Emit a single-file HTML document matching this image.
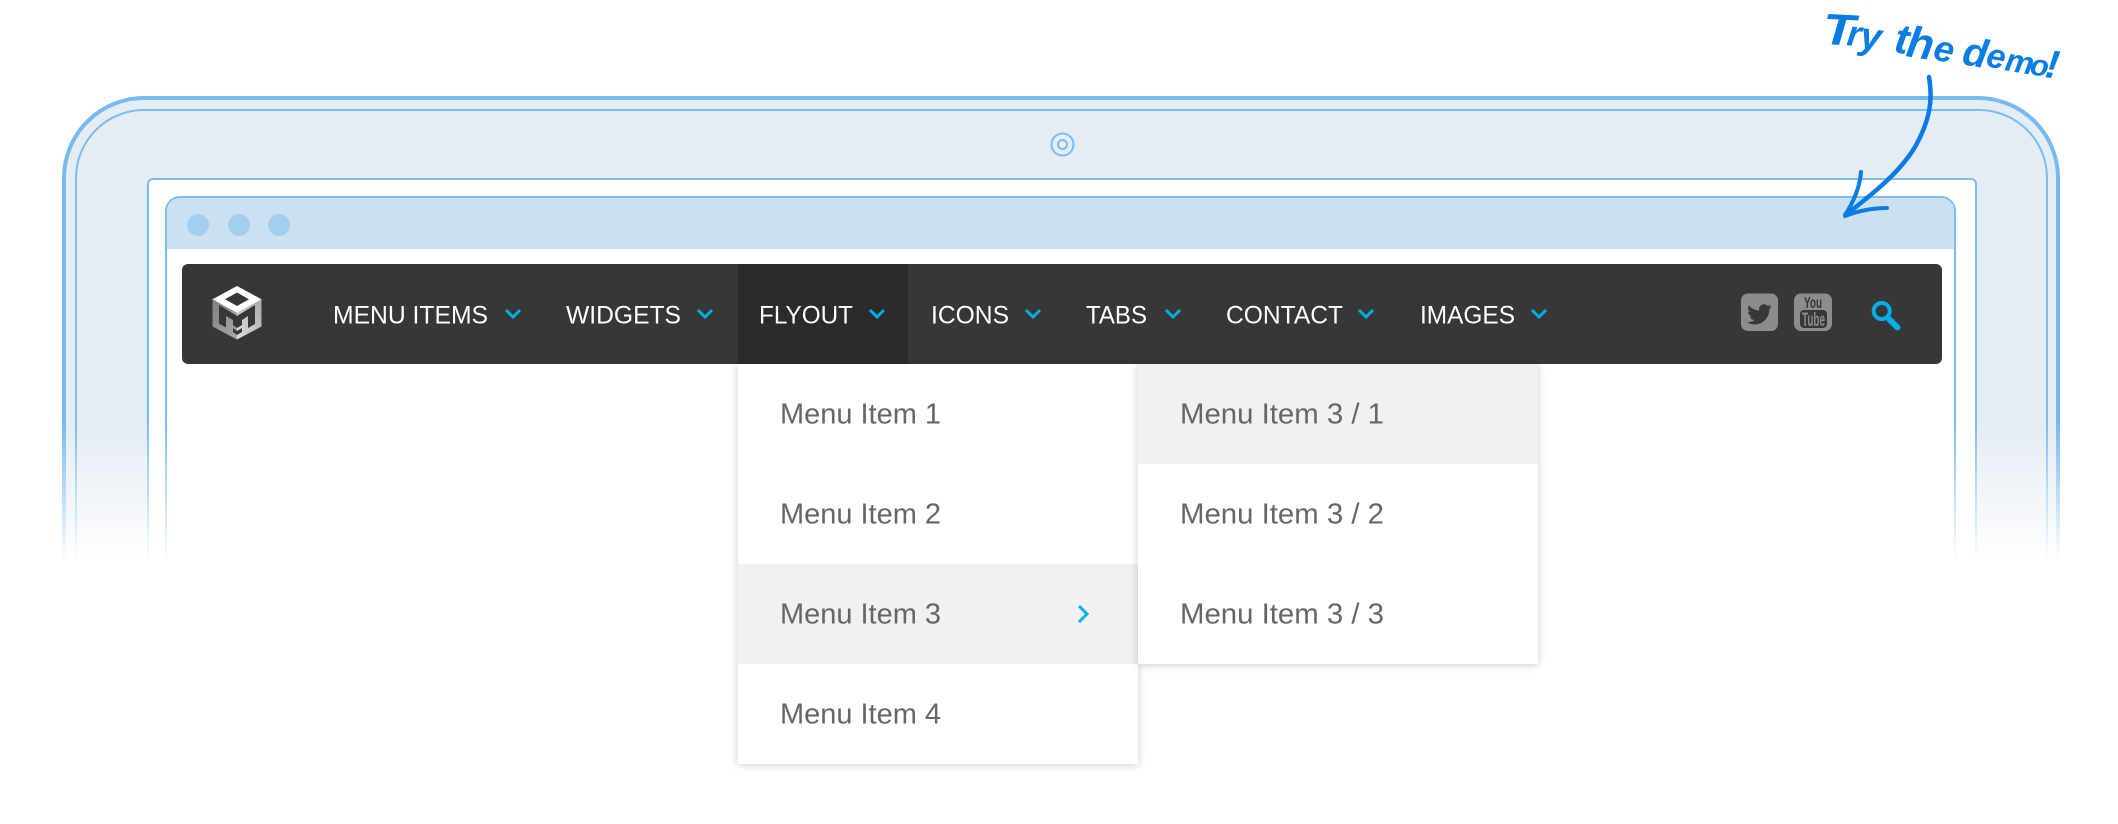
<!DOCTYPE html>
<html lang="en"><head><meta charset="utf-8"><title>Try the demo</title>
<style>
html,body{margin:0;padding:0;background:#fff}
#page{position:relative;width:2118px;height:824px;overflow:hidden;background:#fff;font-family:"Liberation Sans",sans-serif}
#page div{position:absolute;box-sizing:border-box}
.outer{left:62px;top:96px;width:1998px;height:520px;border:4px solid #78b9ee;border-radius:82px 82px 0 0;background:#e4ecf4}
.inner{left:75px;top:109px;width:1973px;height:500px;border:2px solid #7dbcef;border-radius:69px 69px 0 0}
.screen{left:147px;top:178px;width:1830px;height:430px;border:2px solid #7dbcef;border-radius:6px 6px 0 0;background:#fff}
.browser{left:165px;top:196px;width:1791px;height:410px;border:2px solid #7dbcef;border-radius:15px 15px 0 0;background:#fff;overflow:hidden}
.bar{left:0;top:0;right:0;height:51px;background:#cde0f2}
.dot{top:214px;width:22px;height:22px;border-radius:50%;background:#a3cfef}
.fade{left:0;top:422px;width:2118px;height:140px;background:linear-gradient(to bottom,rgba(255,255,255,0),#fff)}
.white{left:0;top:560px;width:2118px;height:264px;background:#fff}
.nav{left:182px;top:264px;width:1760px;height:100px;background:#373737;border-radius:6px}
.tab{left:738px;top:264px;width:170px;height:100px;background:#2b2b2b}
.menu{background:#fff;box-shadow:0 1px 8px rgba(0,0,0,.2)}
.m1{left:738px;top:364px;width:400px;height:400px}
.m2{left:1138px;top:364px;width:400px;height:300px}
.hov{background:#f1f1f1;left:0;width:400px;height:100px}
svg{position:absolute;left:0;top:0}
</style></head><body>
<div id="page">
<div class="outer"></div><div class="inner"></div><div class="screen"></div>
<div class="browser"><div class="bar"></div></div>
<div class="dot" style="left:187px"></div><div class="dot" style="left:228px"></div><div class="dot" style="left:268px"></div>
<div class="fade"></div><div class="white"></div>
<div class="nav"></div><div class="tab"></div>
<div class="menu m1"><div class="hov" style="top:200px"></div></div>
<div class="menu m2"><div class="hov" style="top:0"></div></div>
<svg width="2118" height="824" viewBox="0 0 2118 824" xmlns="http://www.w3.org/2000/svg">
<circle cx="1062.5" cy="144.500" r="11" fill="none" stroke="#7dbcef" stroke-width="2"/>
<circle cx="1062.5" cy="144.500" r="4.500" fill="none" stroke="#7dbcef" stroke-width="2"/>

<!-- logo -->
<defs>
<linearGradient id="lf" x1="0" y1="0" x2="1" y2="1"><stop offset="0" stop-color="#808080"/><stop offset="1" stop-color="#a8a8a8"/></linearGradient>
<linearGradient id="rf" x1="0" y1="1" x2="1" y2="0"><stop offset="0" stop-color="#dedede"/><stop offset="1" stop-color="#a8a8a8"/></linearGradient>
</defs>
<path d="M212.500 299.300L237 313V339.500L212.500 326.500Z" fill="url(#lf)"/>
<path d="M261.500 299.300L237 313V339.500L261.500 326.500Z" fill="url(#rf)"/>
<path fill-rule="evenodd" d="M237 286L261.500 299.300L237 313L212.500 299.300ZM237 292.500L225 299.300L237 306L249 299.300Z" fill="#fff"/>
<path d="M219 305L237 316L255 305V324L248 328V316L242 320V325L237 328L233 325V320L226 316V327.500L219 323.500Z" fill="#373737"/>
<path d="M233 328L237 331L242 328V332L237 335L233 332Z" fill="#373737"/>

<!-- nav labels -->
<g font-family="'Liberation Sans',sans-serif" font-size="25" fill="#fff">
<text x="333" y="323.500" textLength="155" lengthAdjust="spacingAndGlyphs">MENU ITEMS</text>
<text x="566" y="323.500" textLength="115" lengthAdjust="spacingAndGlyphs">WIDGETS</text>
<text x="759" y="323.500" textLength="94" lengthAdjust="spacingAndGlyphs">FLYOUT</text>
<text x="931" y="323.500" textLength="78" lengthAdjust="spacingAndGlyphs">ICONS</text>
<text x="1086" y="323.500" textLength="61" lengthAdjust="spacingAndGlyphs">TABS</text>
<text x="1226" y="323.500" textLength="117" lengthAdjust="spacingAndGlyphs">CONTACT</text>
<text x="1420" y="323.500" textLength="95" lengthAdjust="spacingAndGlyphs">IMAGES</text>
</g>
<g fill="none" stroke="#00aee0" stroke-width="3">
<path d="M506 310L513 317L520 310"/>
<path d="M698 310L705 317L712 310"/>
<path d="M870 310L877 317L884 310"/>
<path d="M1026 310L1033 317L1040 310"/>
<path d="M1166 310L1173 317L1180 310"/>
<path d="M1359 310L1366 317L1373 310"/>
<path d="M1532 310L1539 317L1546 310"/>
<path d="M1079 606L1087 614L1079 622" stroke="#00b4e6"/>
</g>

<!-- social -->
<rect x="1741" y="293.500" width="37" height="37.500" rx="7" fill="#8c8c8c"/>
<path transform="translate(1747 302) scale(1.03)" fill="#373737" d="M23.953 4.57a10 10 0 01-2.825.775 4.958 4.958 0 002.163-2.723c-.951.555-2.005.959-3.127 1.184a4.92 4.92 0 00-8.384 4.482C7.69 8.095 4.067 6.13 1.64 3.162a4.822 4.822 0 00-.666 2.475c0 1.71.87 3.213 2.188 4.096a4.904 4.904 0 01-2.228-.616v.06a4.923 4.923 0 003.946 4.827 4.996 4.996 0 01-2.212.085 4.936 4.936 0 004.604 3.417 9.867 9.867 0 01-6.102 2.105c-.39 0-.779-.023-1.17-.067a13.995 13.995 0 007.557 2.209c9.053 0 13.998-7.496 13.998-13.985 0-.21 0-.42-.015-.63A9.935 9.935 0 0024 4.59z"/>
<rect x="1794" y="293.500" width="38" height="37.500" rx="7" fill="#8c8c8c"/>
<text x="1804" y="308" font-family="'Liberation Sans',sans-serif" font-size="16" font-weight="bold" fill="#373737" textLength="18" lengthAdjust="spacingAndGlyphs">You</text>
<rect x="1800" y="310" width="27" height="18" rx="4" fill="#373737"/>
<text x="1802" y="326" font-family="'Liberation Sans',sans-serif" font-size="19" font-weight="bold" fill="#8c8c8c" textLength="23" lengthAdjust="spacingAndGlyphs">Tube</text>
<circle cx="1881.7" cy="311" r="8" fill="none" stroke="#00b0e6" stroke-width="4"/>
<path d="M1889 319L1897.500 327.500" stroke="#00b0e6" stroke-width="6" stroke-linecap="round"/>

<!-- menu labels -->
<g font-family="'Liberation Sans',sans-serif" font-size="29" fill="#666">
<text x="780" y="423.500" textLength="161" lengthAdjust="spacingAndGlyphs">Menu Item 1</text>
<text x="780" y="523.500" textLength="161" lengthAdjust="spacingAndGlyphs">Menu Item 2</text>
<text x="780" y="623.500" textLength="161" lengthAdjust="spacingAndGlyphs">Menu Item 3</text>
<text x="780" y="723.500" textLength="161" lengthAdjust="spacingAndGlyphs">Menu Item 4</text>
<text x="1180" y="423.500" textLength="204" lengthAdjust="spacingAndGlyphs">Menu Item 3 / 1</text>
<text x="1180" y="523.500" textLength="204" lengthAdjust="spacingAndGlyphs">Menu Item 3 / 2</text>
<text x="1180" y="623.500" textLength="204" lengthAdjust="spacingAndGlyphs">Menu Item 3 / 3</text>
</g>

<!-- handwriting -->
<g font-family="'Liberation Sans',sans-serif" font-style="italic" font-weight="bold" fill="#0a7de3">
<text font-size="44" transform="translate(1822 44) rotate(3) scale(1.2 1)">T</text>
<text font-size="36" transform="translate(1846 45) rotate(7)">r</text>
<text font-size="38" transform="translate(1859 48) rotate(7)">y</text>
<text font-size="42" transform="translate(1893 52) rotate(9)">t</text>
<text font-size="44" transform="translate(1905 56) rotate(9)">h</text>
<text font-size="36" transform="translate(1932 59) rotate(12)">e</text>
<text font-size="40" transform="translate(1961 64) rotate(10)">d</text>
<text font-size="34" transform="translate(1985 66) rotate(10)">e</text>
<text font-size="32" transform="translate(2004 70) rotate(10)">m</text>
<text font-size="30" transform="translate(2029 74) rotate(10)">o</text>
<text font-size="40" transform="translate(2044 77) rotate(8)">!</text>
</g>
<g fill="none" stroke="#0a7de3" stroke-linecap="round">
<path d="M1929 77C1933 100 1930 120 1915 147C1900 172 1875 192 1847 214" stroke-width="4.500"/>
<path d="M1861 172C1860 187 1853 203 1845 215" stroke-width="4"/>
<path d="M1845 216C1858 211 1873 208 1887 208" stroke-width="4"/>
</g>
</svg>
</div>
</body></html>
